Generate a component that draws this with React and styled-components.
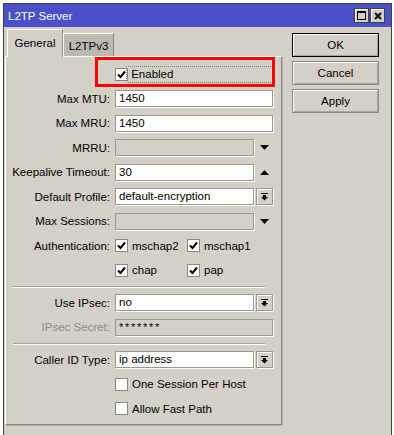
import React from 'react'
import styled, { createGlobalStyle } from 'styled-components'

const Global = createGlobalStyle`
  body {
    margin: 0;
    background: #ffffff;
    overflow: hidden;
    font-family: 'Liberation Sans', Arial, sans-serif;
    font-size: 11.5px;
    color: #000;
  }
`

const Window = styled.div`
  box-sizing: border-box;
  margin: 3px 0 0 3px;
  width: 389px;
  height: 440px;
  border: 1px solid #404040;
  background: #d4d0c8;
`

const TitleBar = styled.div`
  height: 23px;
  background: #4b50c9;
  display: flex;
  align-items: center;
  padding: 0 6px 0 4px;
  color: #fff;
  font-size: 11.5px;
`

const Title = styled.span`
  flex: 1;
`

const TitleButton = styled.div`
  box-sizing: border-box;
  width: 15px;
  height: 15px;
  margin-left: 1px;
  background: #d4d0c8;
  border: 1px solid #404040;
  box-shadow: inset 1px 1px 0 #fff;
  display: flex;
  align-items: center;
  justify-content: center;
`

const Body = styled.div`
  display: flex;
  padding: 2px 0 0 1px;
`

const TabsColumn = styled.div`
  width: 277px;
`

const TabStrip = styled.div`
  display: flex;
  align-items: flex-end;
  height: 27px;
  padding-left: 2px;
  position: relative;
  z-index: 1;
`

const Tab = styled.div`
  box-sizing: border-box;
  width: ${p => p.$w}px;
  height: ${p => (p.$active ? 28 : 23)}px;
  margin-bottom: ${p => (p.$active ? -1 : 0)}px;
  background: ${p => (p.$active ? '#d4d0c8' : '#bdb9b1')};
  border: 1px solid #fff;
  border-right-color: #8a877f;
  border-bottom: none;
  display: flex;
  justify-content: center;
  padding-top: ${p => (p.$active ? 7 : 6)}px;
`

const Panel = styled.div`
  position: relative;
  box-sizing: border-box;
  height: 369px;
  border: 1px solid #fff;
  border-right-color: #8a877f;
  border-bottom-color: #8a877f;
  box-shadow: 1px 1px 0 #b5b1a9;
  padding: 5px 8px 0 0;
`

const Annotation = styled.div`
  position: absolute;
  left: 89px;
  top: 0;
  width: 180px;
  height: 30px;
  box-sizing: border-box;
  border: 3px solid #ff0000;
  pointer-events: none;
`

const Row = styled.div`
  display: grid;
  grid-template-columns: 104px 158px;
  column-gap: 5px;
  align-items: center;
  height: 24.5px;
`

const Label = styled.div`
  text-align: right;
  white-space: nowrap;
  color: ${p => (p.$disabled ? '#8d8a84' : '#000')};
`

const FieldGroup = styled.div`
  display: flex;
  align-items: center;
`

const Input = styled.div`
  box-sizing: border-box;
  flex: 1;
  height: 17px;
  padding: 0 3px;
  line-height: 15px;
  white-space: nowrap;
  overflow: hidden;
  background: ${p => (p.$disabled ? '#d4d0c8' : '#fff')};
  border: 1px solid #9a978f;
  box-shadow: 1px 1px 0 #fff;
  font-size: ${p => (p.$masked ? 11 : 11.5)}px;
  letter-spacing: ${p => (p.$masked ? 1.7 : 0)}px;
`

const ArrowButton = styled.div`
  box-sizing: border-box;
  width: 17px;
  height: 17px;
  margin-left: 2px;
  display: flex;
  align-items: center;
  justify-content: center;
  background: #d4d0c8;
  border: 1px solid #9a978f;
  box-shadow: inset 1px 1px 0 #fff, 1px 1px 0 #fff;
`

const ArrowSlot = styled.div`
  width: 17px;
  height: 17px;
  margin-left: 2px;
  display: flex;
  align-items: center;
  justify-content: center;
`

const Checks = styled.div`
  display: flex;
  align-items: center;
`

const CheckItem = styled.div`
  display: flex;
  align-items: center;
  width: ${p => p.$w || 72}px;
  gap: 4px;
`

const Box = styled.div`
  box-sizing: border-box;
  width: 13px;
  height: 13px;
  flex: none;
  background: #fff;
  border: 1px solid #8a877f;
  display: flex;
  align-items: center;
  justify-content: center;
`

const FocusText = styled.div`
  flex: 1;
  height: 15px;
  line-height: 14px;
  padding-left: 1px;
  margin-left: -2px;
  border: 1px dotted #777;
`

const Separator = styled.div`
  height: 1px;
  margin: 3px 8px 3px 7px;
  background: #a8a49c;
  border-bottom: 1px solid #fff;
`

const Buttons = styled.div`
  display: flex;
  flex-direction: column;
  gap: 4px;
  margin: 4px 0 0 10px;
`

const Button = styled.div`
  box-sizing: border-box;
  width: 87px;
  height: 24px;
  display: flex;
  align-items: center;
  justify-content: center;
  border: 1px solid ${p => (p.$default ? '#000' : '#8a877f')};
  box-shadow: inset 1px 1px 0 #fff, inset -1px -1px 0 #a8a49c;
`

const Check = () => (
  <svg width="9" height="9" viewBox="0 0 9 9">
    <path d="M1 4.5 L3.5 7 L8 1.5" fill="none" stroke="#000" strokeWidth="2" />
  </svg>
)

const DropIcon = () => (
  <svg width="7" height="8" viewBox="0 0 7 8">
    <rect x="0" y="0" width="7" height="1" fill="#000" />
    <rect x="2" y="2" width="3" height="2" fill="#000" />
    <polygon points="0,4 7,4 3.5,7.5" fill="#000" />
  </svg>
)

const Triangle = ({ up }) => (
  <svg width="9" height="5" viewBox="0 0 9 5">
    <polygon points={up ? '0,5 9,5 4.5,0' : '0,0 9,0 4.5,5'} fill="#000" />
  </svg>
)

function Field({ label, value, disabled, labelDisabled, masked, drop, arrow }) {
  return (
    <Row>
      <Label $disabled={labelDisabled}>{label}</Label>
      <FieldGroup>
        <Input $disabled={disabled} $masked={masked}>{value}</Input>
        {drop && (
          <ArrowButton>
            <DropIcon />
          </ArrowButton>
        )}
        {arrow && (
          <ArrowSlot>
            <Triangle up={arrow === 'up'} />
          </ArrowSlot>
        )}
      </FieldGroup>
    </Row>
  )
}

function CheckRow({ label, items }) {
  return (
    <Row>
      <Label>{label}</Label>
      <Checks>
        {items.map(it => (
          <CheckItem key={it.text} $w={it.w}>
            <Box>{it.on && <Check />}</Box>
            {it.text}
          </CheckItem>
        ))}
      </Checks>
    </Row>
  )
}

export default function App() {
  return (
    <>
      <Global />
      <Window>
        <TitleBar>
          <Title>L2TP Server</Title>
          <TitleButton>
            <svg width="9" height="9" viewBox="0 0 9 9">
              <rect x="0.5" y="0.5" width="8" height="8" fill="none" stroke="#000" />
              <rect x="0" y="0" width="9" height="2" fill="#000" />
            </svg>
          </TitleButton>
          <TitleButton>
            <svg width="8" height="8" viewBox="0 0 8 8">
              <path d="M1 1 L7 7 M7 1 L1 7" stroke="#000" strokeWidth="2" />
            </svg>
          </TitleButton>
        </TitleBar>
        <Body>
          <TabsColumn>
            <TabStrip>
              <Tab $active $w={56}>General</Tab>
              <Tab $w={51}>L2TPv3</Tab>
            </TabStrip>
            <Panel>
              <Row>
                <Label />
                <Checks>
                  <Box>
                    <Check />
                  </Box>
                  <FocusText>&nbsp;Enabled</FocusText>
                </Checks>
              </Row>
              <Field label="Max MTU:" value="1450" />
              <Field label="Max MRU:" value="1450" />
              <Field label="MRRU:" disabled arrow="down" />
              <Field label="Keepalive Timeout:" value="30" arrow="up" />
              <Field label="Default Profile:" value="default-encryption" drop />
              <Field label="Max Sessions:" disabled arrow="down" />
              <CheckRow
                label="Authentication:"
                items={[
                  { text: 'mschap2', on: true },
                  { text: 'mschap1', on: true },
                ]}
              />
              <CheckRow
                label=""
                items={[
                  { text: 'chap', on: true },
                  { text: 'pap', on: true },
                ]}
              />
              <Separator />
              <Field label="Use IPsec:" value="no" drop />
              <Field label="IPsec Secret:" value="*******" disabled labelDisabled masked />
              <Separator />
              <Field label="Caller ID Type:" value="ip address" drop />
              <CheckRow label="" items={[{ text: 'One Session Per Host', w: 150 }]} />
              <CheckRow label="" items={[{ text: 'Allow Fast Path', w: 150 }]} />
              <Annotation />
            </Panel>
          </TabsColumn>
          <Buttons>
            <Button $default>OK</Button>
            <Button>Cancel</Button>
            <Button>Apply</Button>
          </Buttons>
        </Body>
      </Window>
    </>
  )
}
